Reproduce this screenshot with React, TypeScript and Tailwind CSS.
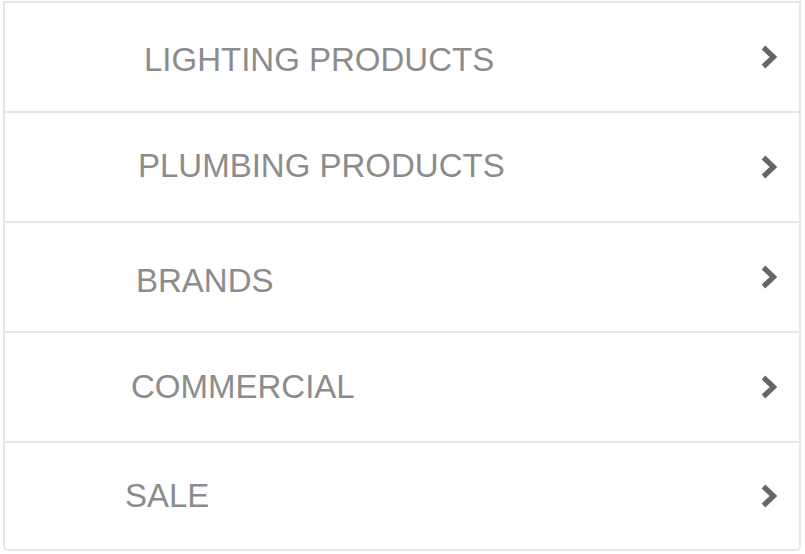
const items = [
  { label: 'LIGHTING PRODUCTS', cls: 'pl-[139px] translate-y-[2px]' },
  { label: 'PLUMBING PRODUCTS', cls: 'pl-[133px] -translate-y-[2px]' },
  { label: 'BRANDS', cls: 'pl-[131px] translate-y-[3px]' },
  { label: 'COMMERCIAL', cls: 'pl-[126px] -translate-y-[1px]' },
  { label: 'SALE', cls: 'pl-[120px] -translate-y-[1px]' },
];

function Chevron() {
  return (
    <svg width="20" height="28" viewBox="0 0 20 28" className="shrink-0">
      <polyline
        points="4.5,4.5 14.5,14 4.5,23.5"
        fill="none"
        stroke="#666666"
        strokeWidth="5.2"
        strokeLinejoin="miter"
      />
    </svg>
  );
}

export default function App() {
  return (
    <div className="w-[805px] h-[554px] bg-white pt-[1px] pl-[3px] overflow-hidden">
      <ul className="w-[798px] border-2 border-[#e6e6e6] rounded-b-[5px]">
        {items.map((item, index) => (
          <li
            key={item.label}
            className={`flex items-center justify-between pr-[20px] ${
              index < items.length - 1 ? 'h-[110px] border-b-2 border-[#e6e6e6]' : 'h-[106px]'
            }`}
          >
            <span
              className={`${item.cls} text-[33px] leading-none text-[#8c8c8c]`}
              style={{ fontFamily: '"Liberation Sans", Arial, sans-serif' }}
            >
              {item.label}
            </span>
            <Chevron />
          </li>
        ))}
      </ul>
    </div>
  );
}
